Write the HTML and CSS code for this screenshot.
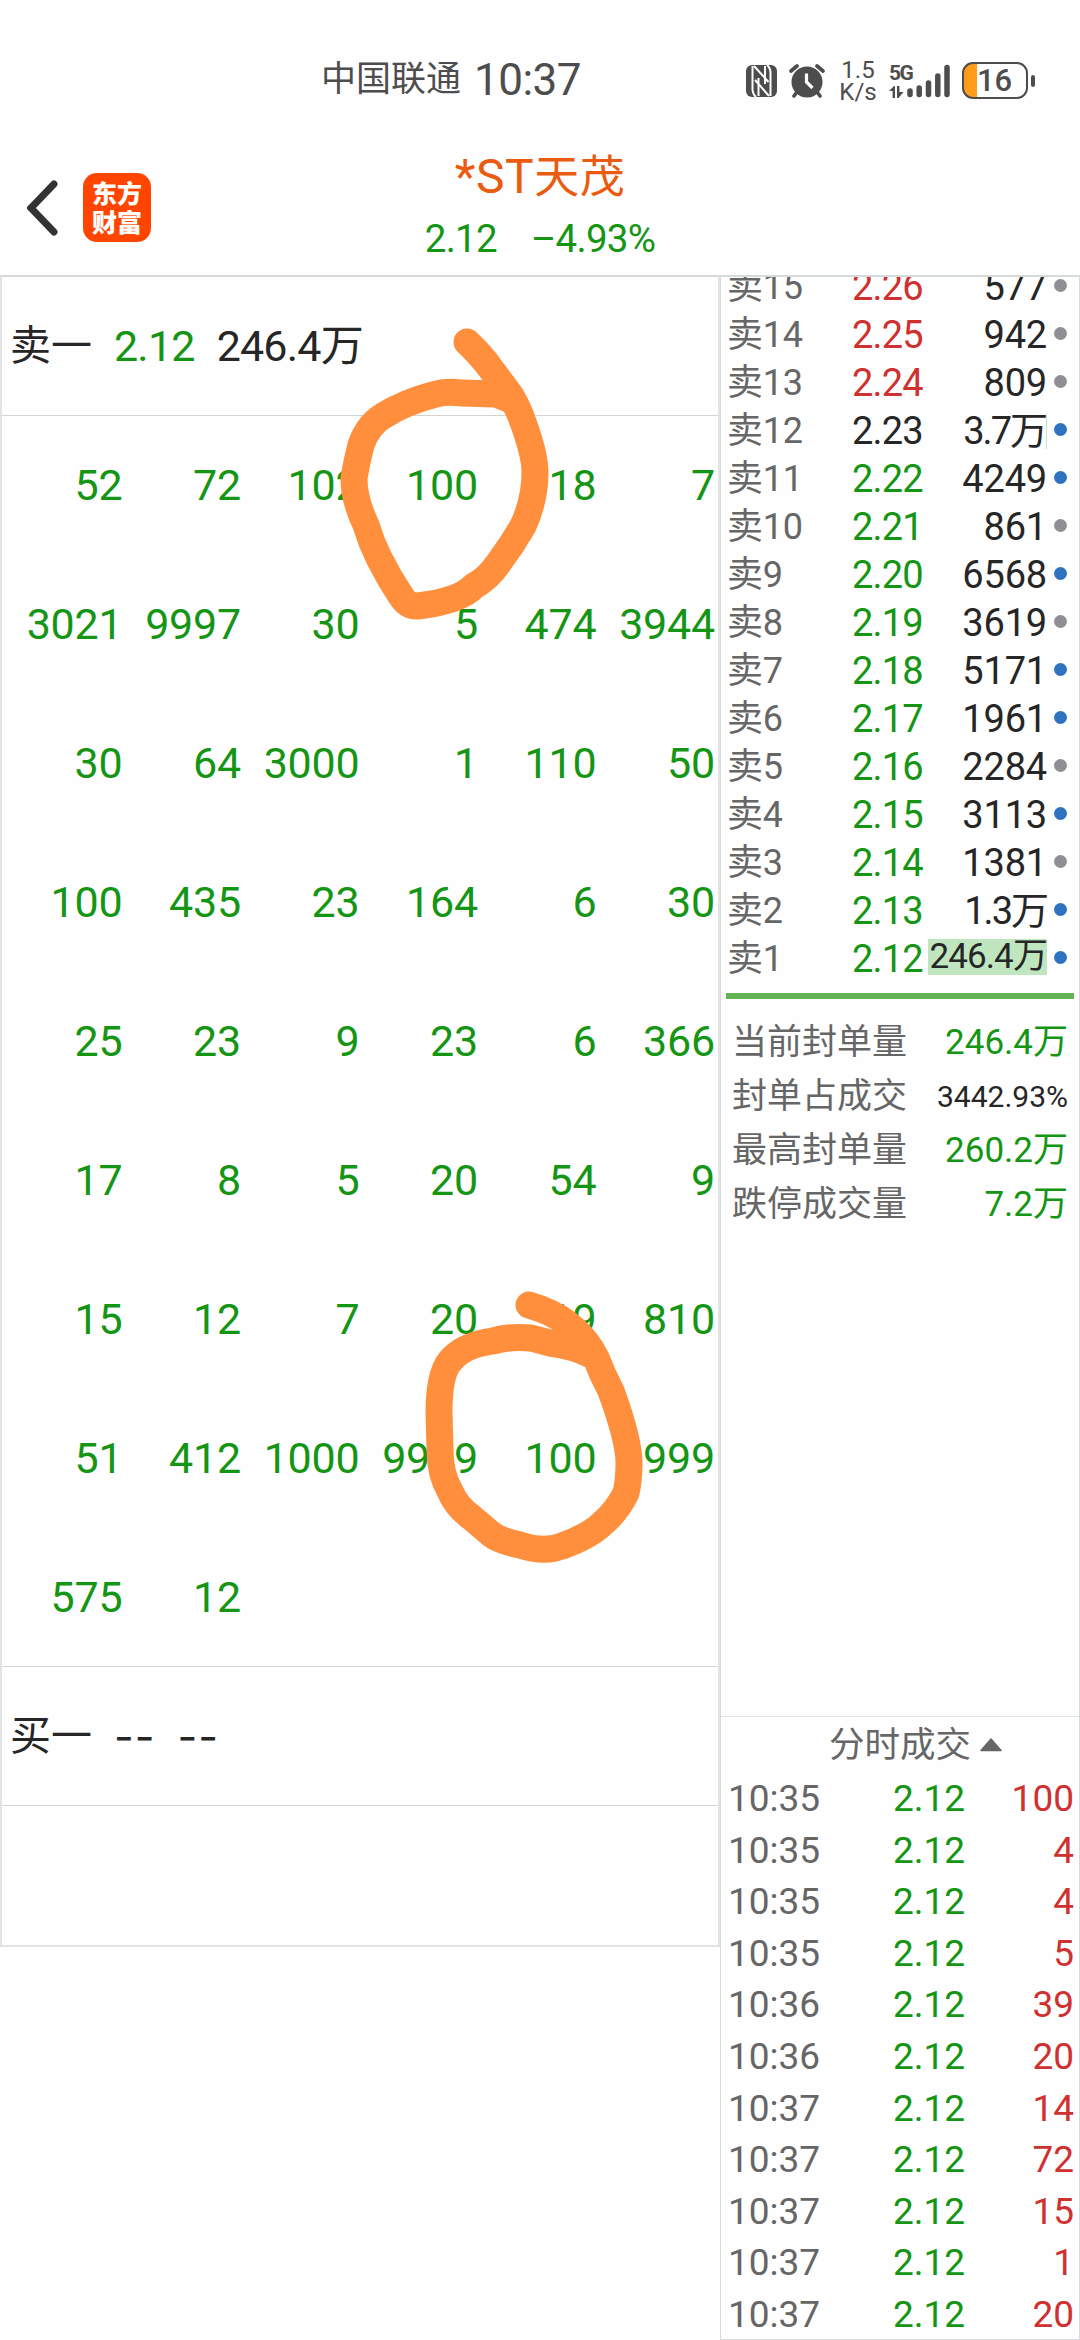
FILE: index.html
```html
<!DOCTYPE html>
<html lang="zh-CN">
<head>
    <meta charset="UTF-8">
    <meta name="viewport" content="width=device-width, initial-scale=1.0">
    <title>*ST天茂</title>
    <link rel="stylesheet" href="styles.css">
</head>
<body>
    <div class="status-bar">
        <div class="carrier">中国联通</div>
        <div class="clock">10:37</div>
        <div class="status-icons">
            <svg class="nfc" width="31" height="32" viewBox="0 0 31 32">
                <rect x="0" y="0" width="31" height="32" rx="6" fill="#4d4d4d"/>
                <path d="M6.500 1 V24 Q6.500 29 10 32 M24.500 31 V8 Q24.500 3 21 0" fill="none" stroke="#fff" stroke-width="2"/>
                <path d="M8 1 L22.500 17 M9 15 L23 31 M12.500 13 V31 M19 1 V19" fill="none" stroke="#fff" stroke-width="2"/>
            </svg>
            <svg class="alarm" width="36" height="34" viewBox="0 0 36 34">
                <circle cx="18" cy="18" r="15.500" fill="#4d4d4d"/>
                <path d="M2 7 L8 2 M28 2 L34 7 M8 28 L5 32 M28 28 L31 32" stroke="#4d4d4d" stroke-width="3.6" stroke-linecap="round"/>
                <path d="M17.5 9.5 V18 L23.5 24" fill="none" stroke="#fff" stroke-width="3.2"/>
            </svg>
            <div class="speed"><span>1.5</span><span>K/s</span></div>
            <div class="network">
                <span>5G</span>
                <svg width="15" height="12" viewBox="0 0 15 12" fill="#4d4d4d">
                    <path d="M0 5 L5 0 H6 V12 H3.6 V5 Z M8 0 H10.4 V6 H14.5 L9.5 12 H8 Z"/>
                </svg>
            </div>
            <svg class="signal" width="43" height="34" viewBox="0 0 43 34" stroke="#4d4d4d" stroke-width="5.500" stroke-linecap="round">
                <path d="M3 27 V30.500 M12.200 24 V30.500 M21.500 19 V30.500 M30.800 12 V30.500 M40 3.500 V30.500"/>
            </svg>
            <div class="battery"><span>16</span></div>
            <div class="battery-tip"></div>
        </div>
    </div>

    <header class="header">
        <svg class="back" width="32" height="56" viewBox="0 0 32 56">
            <path d="M27 4 L4 28 L27 52" fill="none" stroke="#333" stroke-width="7" stroke-linecap="round"/>
        </svg>
        <div class="logo">东方<br>财富</div>
        <div class="stock">
            <h1>*ST<span>天茂</span></h1>
            <p><span>2.12</span><span>–4.93%</span></p>
        </div>
    </header>

    <main class="main">
        <section class="queue">
            <div class="level"><b>卖一</b><span class="green">2.12</span><span>246.4万</span></div>
            <div class="orders">
                <span>52</span><span>72</span><span>102</span><span>100</span><span>18</span><span>7</span>
                <span>3021</span><span>9997</span><span>30</span><span>5</span><span>474</span><span>3944</span>
                <span>30</span><span>64</span><span>3000</span><span>1</span><span>110</span><span>50</span>
                <span>100</span><span>435</span><span>23</span><span>164</span><span>6</span><span>30</span>
                <span>25</span><span>23</span><span>9</span><span>23</span><span>6</span><span>366</span>
                <span>17</span><span>8</span><span>5</span><span>20</span><span>54</span><span>9</span>
                <span>15</span><span>12</span><span>7</span><span>20</span><span>19</span><span>810</span>
                <span>51</span><span>412</span><span>1000</span><span>9999</span><span>100</span><span>999</span>
                <span>575</span><span>12</span>
            </div>
            <div class="level buy"><b>买一</b><span class="dash">--</span><span class="dash">--</span></div>
            <div class="blank"></div>
        </section>

        <aside class="side">
            <div class="asks">
                <div class="ask"><span>卖15</span><span class="red">2.26</span><em>577</em><i></i></div>
                <div class="ask"><span>卖14</span><span class="red">2.25</span><em>942</em><i></i></div>
                <div class="ask"><span>卖13</span><span class="red">2.24</span><em>809</em><i></i></div>
                <div class="ask wan thin"><span>卖12</span><span class="black">2.23</span><em>3.7万</em><i class="blue"></i></div>
                <div class="ask"><span>卖11</span><span class="green">2.22</span><em>4249</em><i class="blue"></i></div>
                <div class="ask"><span>卖10</span><span class="green">2.21</span><em>861</em><i></i></div>
                <div class="ask"><span>卖9</span><span class="green">2.20</span><em>6568</em><i class="blue"></i></div>
                <div class="ask"><span>卖8</span><span class="green">2.19</span><em>3619</em><i></i></div>
                <div class="ask"><span>卖7</span><span class="green">2.18</span><em>5171</em><i class="blue"></i></div>
                <div class="ask"><span>卖6</span><span class="green">2.17</span><em>1961</em><i class="blue"></i></div>
                <div class="ask"><span>卖5</span><span class="green">2.16</span><em>2284</em><i></i></div>
                <div class="ask"><span>卖4</span><span class="green">2.15</span><em>3113</em><i class="blue"></i></div>
                <div class="ask"><span>卖3</span><span class="green">2.14</span><em>1381</em><i></i></div>
                <div class="ask wan"><span>卖2</span><span class="green">2.13</span><em>1.3万</em><i class="blue"></i></div>
                <div class="ask full"><span>卖1</span><span class="green">2.12</span><em>246.4万</em><i class="blue"></i></div>
            </div>
            <div class="divider"></div>
            <div class="stats">
                <div><span>当前封单量</span><span class="green">246.4万</span></div>
                <div><span>封单占成交</span><span class="small">3442.93%</span></div>
                <div><span>最高封单量</span><span class="green">260.2万</span></div>
                <div><span>跌停成交量</span><span class="green">7.2万</span></div>
            </div>
            <div class="trades">
                <div class="trades-title">分时成交
                    <svg width="22" height="14" viewBox="0 0 22 14"><path d="M11 1 L21 12.500 H1 Z" fill="#666" stroke="#666" stroke-width="1.500" stroke-linejoin="round"/></svg>
                </div>
                <div class="trade"><span>10:35</span><span class="green">2.12</span><span class="red">100</span></div>
                <div class="trade"><span>10:35</span><span class="green">2.12</span><span class="red">4</span></div>
                <div class="trade"><span>10:35</span><span class="green">2.12</span><span class="red">4</span></div>
                <div class="trade"><span>10:35</span><span class="green">2.12</span><span class="red">5</span></div>
                <div class="trade"><span>10:36</span><span class="green">2.12</span><span class="red">39</span></div>
                <div class="trade"><span>10:36</span><span class="green">2.12</span><span class="red">20</span></div>
                <div class="trade"><span>10:37</span><span class="green">2.12</span><span class="red">14</span></div>
                <div class="trade"><span>10:37</span><span class="green">2.12</span><span class="red">72</span></div>
                <div class="trade"><span>10:37</span><span class="green">2.12</span><span class="red">15</span></div>
                <div class="trade"><span>10:37</span><span class="green">2.12</span><span class="red">1</span></div>
                <div class="trade"><span>10:37</span><span class="green">2.12</span><span class="red">20</span></div>
            </div>
        </aside>
    </main>

    <!-- hand-drawn marks -->
    <svg class="marks" width="1080" height="2340" viewBox="0 0 1080 2340">
        <path d="M467 342 Q481 355 491 369 Q503 385 511 396 Q519 410 523 422 Q535 455 535 472 Q535 500 523 526 Q512 545 500 561 Q489 578 474 586 Q460 601 418 606 Q408 607 401 596 Q389 578 379 558 Q371 542 366 525 Q354 500 354 478 Q357 460 361 445 Q368 425 383 416 Q405 402 436 394 Q448 391 461 393 L496 394 L511 400"/>
        <path d="M529 1305 L541 1309 Q562 1317 575 1330 Q588 1342 596 1358 Q603 1376 611 1391 Q629 1440 629 1463 Q629 1480 626 1493 Q617 1511 603 1523 Q590 1536 562 1546 Q544 1553 520 1545 Q500 1541 491 1534 L471 1517 Q456 1506 450 1491 Q440 1474 440 1450 L439 1412 Q439 1370 453 1358 Q465 1345 493 1341 Q510 1336 531 1338 L550 1343 Q575 1346 593 1356"/>
    </svg>
</body>
</html>
```

FILE: styles.css
```css
* {
    box-sizing: border-box;
}

body {
    margin: 0;
    width: 1080px;
    height: 2340px;
    overflow: hidden;
    position: relative;
    display: flex;
    flex-direction: column;
    background: #fefefe;
    color: #262626;
    font-family: Roboto, "Noto Sans CJK SC", sans-serif;
}

.green { color: #149514; }
.red { color: #cf3030; }
.black { color: #262626; }

/* Status bar */
.status-bar {
    height: 140px;
    padding: 20px 0 0 321px;
    display: flex;
    align-items: flex-start;
    line-height: 120px;
    color: #4d4d4d;
    white-space: nowrap;
    flex: none;
}

.carrier {
    font-size: 35px;
    width: 153px;
}

.clock {
    font-size: 44px;
    letter-spacing: -0.5px;
    width: 272px;
}

.status-icons {
    height: 121px;
    display: flex;
    align-items: center;
}

.alarm {
    margin-left: 12px;
}

.speed {
    display: flex;
    flex-direction: column;
    align-items: center;
    width: 36px;
    margin-left: 15px;
    font-size: 24px;
    line-height: 22px;
}

.network {
    width: 18px;
    margin-left: 13px;
    height: 34px;
    font-size: 21px;
    font-weight: 700;
    line-height: 18px;
    letter-spacing: -1.5px;
    display: flex;
    flex-direction: column;
    justify-content: space-between;
}

.battery {
    width: 66px;
    height: 37px;
    margin-left: 12px;
    border: 2.5px solid #4d4d4d;
    border-radius: 11px;
    background: linear-gradient(90deg, #ff9c1a 13px, transparent 13px);
    font-size: 31px;
    font-weight: 500;
    line-height: 33px;
    padding-left: 13px;
    overflow: hidden;
}

.battery-tip {
    width: 4px;
    height: 12px;
    margin-left: 3px;
    border-radius: 2px;
    background: #4d4d4d;
}

/* Header */
.header {
    height: 135px;
    flex: none;
    display: flex;
    align-items: center;
    padding-left: 27px;
}

.logo {
    width: 68px;
    height: 69px;
    margin-left: 24px;
    padding: 5px 0 0 9px;
    border-radius: 14px;
    background: #ff4500;
    color: #fff;
    font-family: "Noto Sans CJK SC", sans-serif;
    font-size: 25px;
    font-weight: 900;
    line-height: 29px;
}

.stock {
    width: 432px;
    margin: -4px 0 0 173px;
    text-align: center;
    color: #ea5b10;
}

.stock h1 {
    margin: 0;
    font-size: 48px;
    line-height: 66px;
    font-weight: 400;
    letter-spacing: 0.5px;
}

.stock h1 span {
    font-size: 45px;
}

.stock p {
    margin: 0;
    display: flex;
    justify-content: center;
    gap: 34px;
    color: #149514;
    font-size: 38.5px;
    line-height: 56px;
    letter-spacing: -0.7px;
}

/* Main */
.main {
    flex: 1;
    display: flex;
    align-items: flex-start;
}

.queue {
    width: 720px;
    height: 1672px;
    border: 2px solid #e3e3e3;
    border-top-color: #d5d8d6;
    font-size: 43px;
}

.level {
    height: 139px;
    padding: 0 0 1px 8px;
    border-bottom: 1px solid #d0d5d2;
    display: flex;
    align-items: center;
    gap: 22px;
    line-height: 60px;
    letter-spacing: -0.8px;
}

.level b {
    font-weight: 400;
    font-size: 41px;
    letter-spacing: 0;
}

.level .dash {
    font-family: Inter, sans-serif;
    letter-spacing: 1px;
}

.orders {
    display: grid;
    grid-template-columns: repeat(6, 118.5px);
    grid-auto-rows: 138.900px;
    justify-content: end;
    align-items: center;
    text-align: right;
    padding-right: 3px;
    border-bottom: 1px solid #d0d5d2;
    color: #149514;
    letter-spacing: -0.2px;
}

.side {
    width: 360px;
    height: 2065px;
    border: 1px solid #d5dadb;
    border-top-width: 2px;
    overflow: hidden;
    display: flex;
    flex-direction: column;
}

.asks {
    margin-top: -14px;
}

.ask {
    display: flex;
    align-items: center;
    height: 48px;
    padding-left: 6px;
    font-size: 38px;
    line-height: 48px;
    letter-spacing: -0.2px;
    color: #666;
    white-space: nowrap;
}

.ask span:first-child {
    width: 125px;
    font-size: 36px;
}

.ask span:nth-child(2) {
    letter-spacing: -0.8px;
}

.ask em {
    flex: 1;
    font-style: normal;
    text-align: right;
    color: #262626;
}

.ask i {
    width: 13px;
    height: 13px;
    margin: -4px 12px 0 7px;
    border-radius: 50%;
    background: #908f96;
}

.ask i.blue {
    background: #2f72c0;
}

.wan em {
    letter-spacing: -2px;
}

.thin em {
    line-height: 36px;
    border-right: 1px solid #c5e5c8;
}

.full em {
    flex: none;
    width: 119px;
    height: 36px;
    margin: -4px 0 0 auto;
    line-height: 36px;
    font-size: 35px;
    letter-spacing: -0.9px;
    background: #c0e6c0;
}

.divider {
    height: 6px;
    margin: 10px 5px 0;
    background: #62b351;
    flex: none;
}

.stats {
    padding: 17px 11px 0 11px;
}

.stats div {
    height: 54px;
    display: flex;
    justify-content: space-between;
    align-items: center;
    font-size: 35px;
    line-height: 54px;
    color: #666;
}

.stats .green {
    color: #149514;
}

.stats .small {
    font-size: 30px;
    color: #262626;
}

.trades {
    margin-top: auto;
    border-top: 1px solid #e3e6e6;
    height: 623px;
}

.trades-title {
    height: 56px;
    padding-left: 108px;
    display: flex;
    align-items: center;
    gap: 9px;
    font-size: 35.5px;
    line-height: 56px;
    color: #666;
}

.trade {
    display: grid;
    grid-template-columns: 165px 80px 1fr;
    height: 51.6px;
    padding: 0 5px 0 7px;
    font-size: 37px;
    line-height: 52px;
    color: #666;
}

.trade .red {
    text-align: right;
}

.marks {
    position: absolute;
    top: 0;
    left: 0;
    fill: none;
    stroke: #ff8f3c;
    stroke-width: 27px;
    stroke-linecap: round;
    stroke-linejoin: round;
}
```
